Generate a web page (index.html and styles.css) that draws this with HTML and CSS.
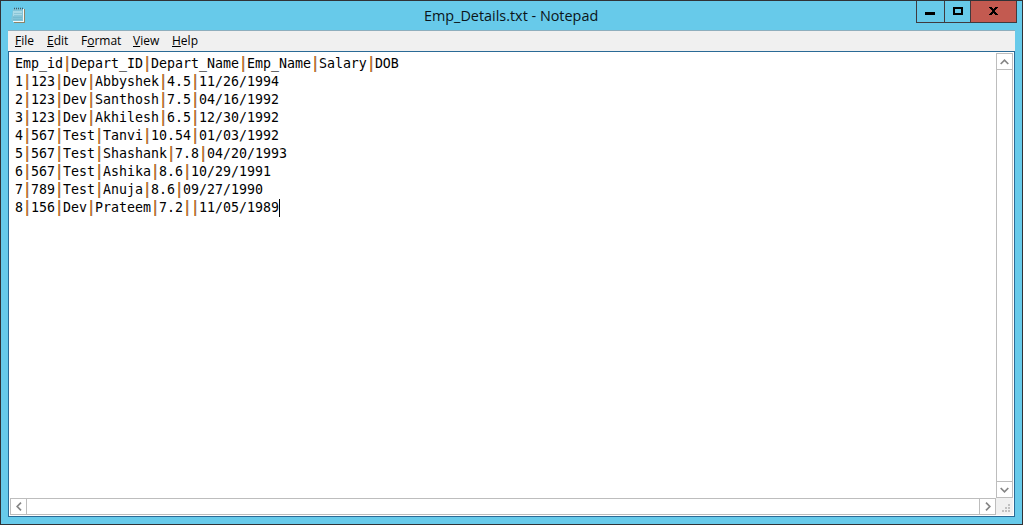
FILE: index.html
```html
<!DOCTYPE html>
<html lang="en">
<head>
<meta charset="utf-8">
<title>Emp_Details.txt - Notepad</title>
<link rel="stylesheet" href="styles.css">
</head>
<body>
<div class="window">
  <header class="titlebar">
    <svg class="app-icon" width="16" height="17" viewBox="0 0 16 17">
      <path d="M3 2h11v14H3z" fill="#8c8468"/>
      <path d="M2 2h11v13H2z" fill="#f4fafa"/>
      <path d="M2 2h10v12H0z" fill="#82c4d8"/>
      <path d="M2 4h9v5H2z" fill="#a9dae7"/>
      <path d="M3 6.5h8M3 8.5h8M2 10.5h9M2 12.5h9" stroke="#6ab3c9" stroke-width=".5"/>
      <path d="M3 1.5h10" stroke="#455963" stroke-width="1.4" stroke-dasharray="1 1"/>
    </svg>
    <h1 class="title">Emp_Details.txt - Notepad</h1>
    <div class="controls">
      <button class="control minimize" aria-label="Minimize"><svg width="10" height="3"><path d="M0 0h10v3H0z"/></svg></button>
      <button class="control maximize" aria-label="Maximize"><svg width="10" height="8"><path d="M1 1h8v6H1z" fill="none" stroke="#000" stroke-width="2"/></svg></button>
      <button class="control close" aria-label="Close"><svg width="9" height="8" shape-rendering="crispEdges"><path d="M0 0h3v1h1v1h1V1h1V0h3v1H8v1H7v1H6v2h1v1h1v1h1v1H6V7H5V6H4v1H3v1H0V7h1V6h1V5h1V3H2V2H1V1H0z"/></svg></button>
    </div>
  </header>
  <nav class="menubar">
    <span class="menu file"><u>F</u>ile</span>
    <span class="menu edit"><u>E</u>dit</span>
    <span class="menu format">F<u>o</u>rmat</span>
    <span class="menu view"><u>V</u>iew</span>
    <span class="menu help"><u>H</u>elp</span>
  </nav>
  <main class="editor">
    <pre class="text">Emp_id<i>|</i>Depart_ID<i>|</i>Depart_Name<i>|</i>Emp_Name<i>|</i>Salary<i>|</i>DOB
1<i>|</i>123<i>|</i>Dev<i>|</i>Abbyshek<i>|</i>4.5<i>|</i>11/26/1994
2<i>|</i>123<i>|</i>Dev<i>|</i>Santhosh<i>|</i>7.5<i>|</i>04/16/1992
3<i>|</i>123<i>|</i>Dev<i>|</i>Akhilesh<i>|</i>6.5<i>|</i>12/30/1992
4<i>|</i>567<i>|</i>Test<i>|</i>Tanvi<i>|</i>10.54<i>|</i>01/03/1992
5<i>|</i>567<i>|</i>Test<i>|</i>Shashank<i>|</i>7.8<i>|</i>04/20/1993
6<i>|</i>567<i>|</i>Test<i>|</i>Ashika<i>|</i>8.6<i>|</i>10/29/1991
7<i>|</i>789<i>|</i>Test<i>|</i>Anuja<i>|</i>8.6<i>|</i>09/27/1990
8<i>|</i>156<i>|</i>Dev<i>|</i>Prateem<i>|</i>7.2<i>|</i><i>|</i>11/05/1989<span class="caret"></span></pre>
    <div class="scroll vertical">
      <span class="arrow"><svg width="9" height="6"><path d="M.7 5L4.5 1.2 8.3 5"/></svg></span>
      <span class="arrow"><svg width="9" height="6"><path d="M.7 1L4.5 4.8 8.3 1"/></svg></span>
    </div>
    <div class="scroll horizontal">
      <span class="arrow"><svg width="6" height="9"><path d="M5 .7L1.2 4.5 5 8.3"/></svg></span>
      <span class="arrow"><svg width="6" height="9"><path d="M1 .7L4.8 4.5 1 8.3"/></svg></span>
    </div>
    <div class="grip"><svg width="8" height="8" shape-rendering="crispEdges"><path d="M6 0h2v2H6zM3 3h2v2H3zM6 3h2v2H6zM0 6h2v2H0zM3 6h2v2H3zM6 6h2v2H6z" fill="#c0c0c0"/></svg></div>
  </main>
</div>
</body>
</html>
```
FILE: styles.css
```css
* { box-sizing: border-box; }
body { margin: 0; width: 1023px; height: 525px; overflow: hidden; }
.window {
  height: 525px;
  display: flex;
  flex-direction: column;
  padding: 0 7px 7px;
  background: #67caea;
  border: 1px solid #303236;
}
.titlebar { height: 29px; display: flex; }
.app-icon { margin: 6px 0 0 3px; flex: none; }
.title {
  flex: 1;
  margin: 0;
  padding-left: 397px;
  font: 14.4px/29px "Open Sans", "Noto Sans", sans-serif;
  white-space: nowrap;
  color: #0b1519;
}
.controls { display: flex; height: 22px; margin-right: -2px; border: 1px solid #403a3e; border-top: 0; }
.control {
  display: flex;
  align-items: center;
  justify-content: center;
  padding: 0;
  border: 0;
  border-right: 1px solid #403a3e;
  background: transparent;
}
.minimize { width: 28px; padding: 4px 1px 0 0; }
.maximize { width: 26px; padding-bottom: 1px; }
.close { width: 45px; padding-bottom: 1px; border-right: 0; background: #c35a50; }
.menubar {
  height: 21px;
  display: flex;
  padding-left: 7px;
  background: #f0f0f0;
  border-top: 1px solid #8eaebd;
  font: 12px/20px "Open Sans", "Noto Sans", sans-serif;
  color: #000;
}
.menu { white-space: nowrap; }
.menu u { text-underline-offset: 1px; }
.file { width: 32px; }
.edit { width: 34px; }
.format { width: 52px; }
.view { width: 39px; }
.editor {
  flex: 1;
  display: grid;
  grid-template-columns: 1fr 17px;
  grid-template-rows: 1fr 17px;
  padding: 1px;
  background: #fff;
  border: 1px solid #2a6a96;
}
.text {
  margin: 0;
  padding: 2px 0 0 5px;
  font: 13.29px/18px "DejaVu Sans Mono", "Liberation Mono", monospace;
  color: #000;
}
.text i {
  display: inline-block;
  height: 18px;
  vertical-align: top;
  font-style: normal;
  color: #b8680c;
  text-shadow: .6px 0 #806a68;
  transform: translateY(-1px) scaleY(1.15);
}
.caret { display: inline-block; width: 1px; height: 18px; background: #000; vertical-align: top; }
.scroll { display: flex; justify-content: space-between; border: 1px solid #bdbdbd; }
.vertical { flex-direction: column; }
.arrow { width: 15px; height: 15px; display: flex; align-items: center; justify-content: center; }
.arrow path { fill: none; stroke: #858585; stroke-width: 1.7; }
.vertical .arrow { height: 16px; }
.vertical .arrow:first-child { border-bottom: 1px solid #bdbdbd; }
.vertical .arrow:last-child { border-top: 1px solid #bdbdbd; }
.horizontal .arrow { width: 16px; }
.horizontal .arrow:first-child { border-right: 1px solid #bdbdbd; }
.horizontal .arrow:last-child { border-left: 1px solid #bdbdbd; }
.grip { display: flex; align-items: flex-end; justify-content: flex-end; padding: 3px; background: #f0f0f0; }
```
